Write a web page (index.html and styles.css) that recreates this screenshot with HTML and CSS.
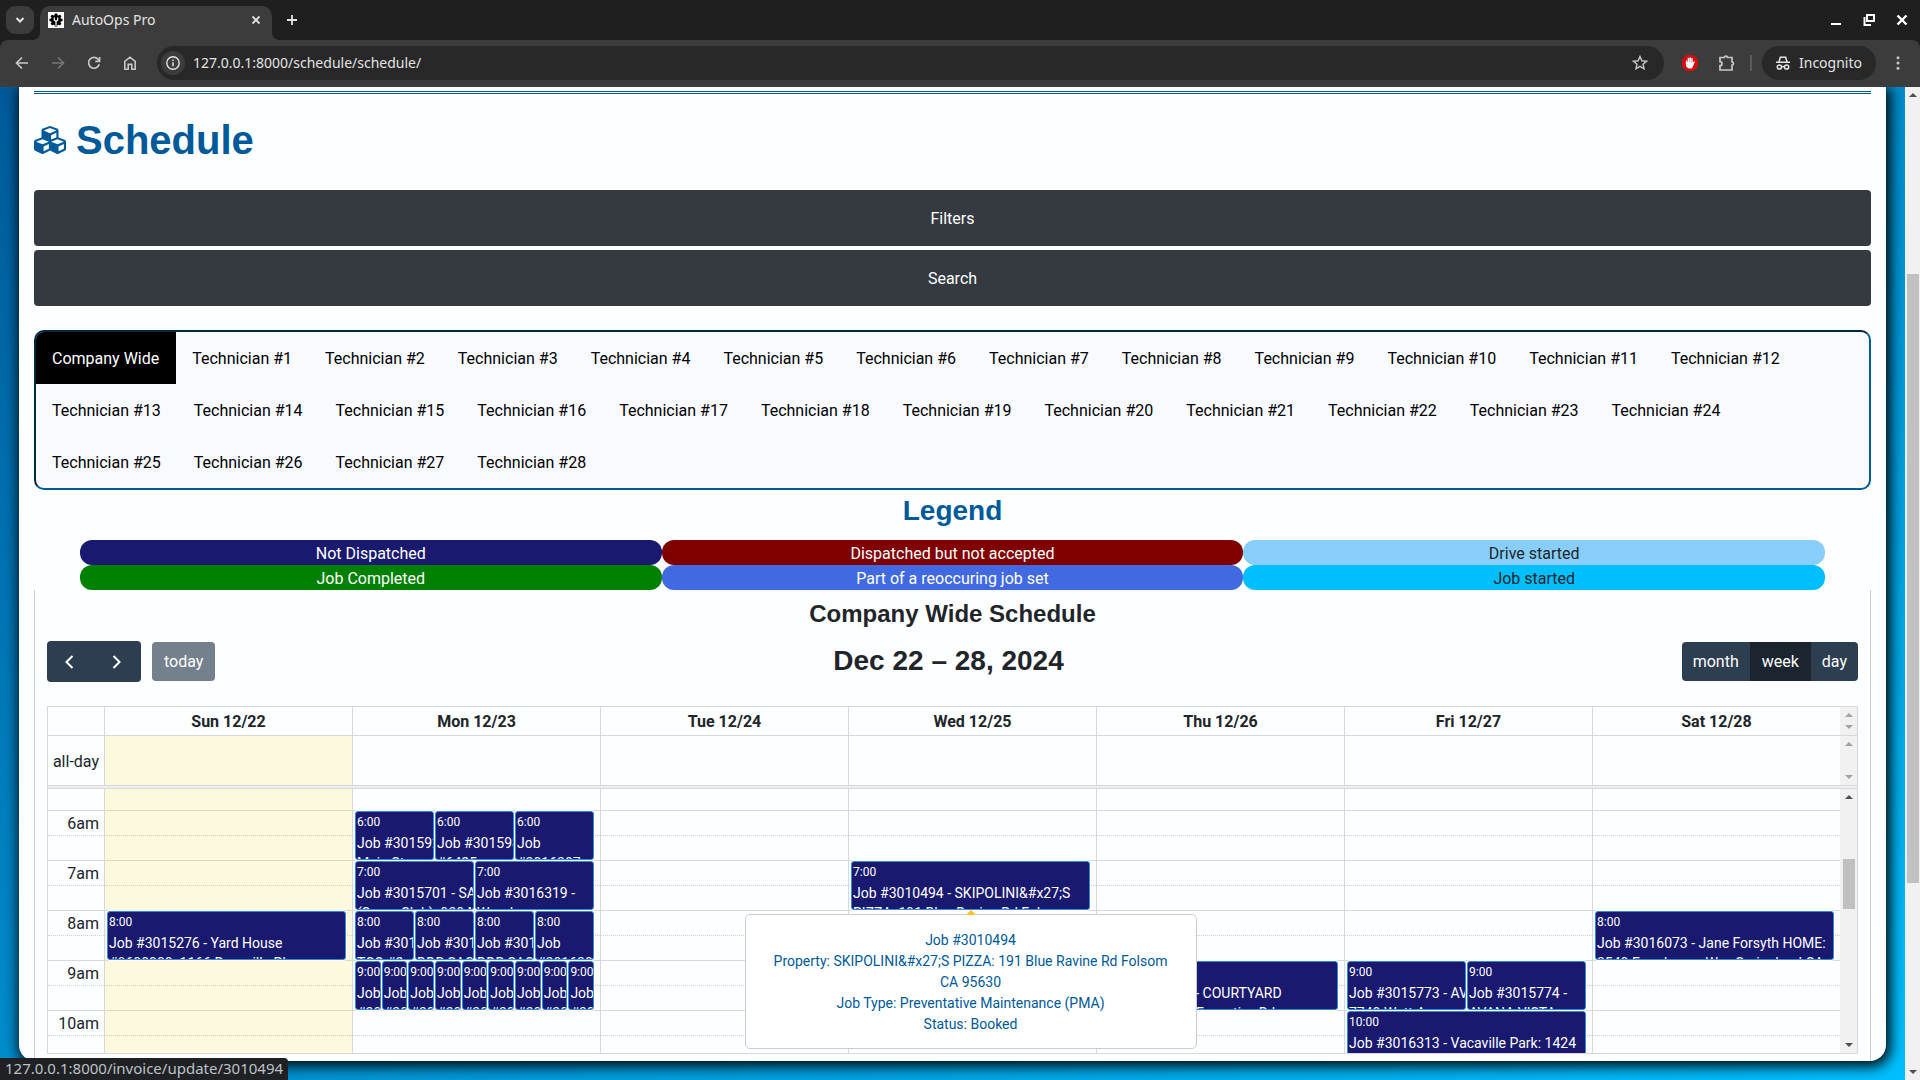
FILE: index.html
```html
<!DOCTYPE html>
<html lang="en">
<head>
    <meta charset="UTF-8">
    <meta name="viewport" content="width=device-width, initial-scale=1.0">
    <title>AutoOps Pro</title>
    <link rel="stylesheet" href="styles.css">
</head>
<body>
    <!-- Browser window -->
    <div class="tab-strip">
        <button class="tab-search" aria-label="Search tabs">
            <svg width="10" height="10" viewBox="0 0 10 10"><path d="M1.5 3L5 6.5 8.5 3" fill="none" stroke="#e3e3e3" stroke-width="2"/></svg>
        </button>
        <div class="browser-tab">
            <svg class="favicon" width="16" height="16" viewBox="0 0 16 16">
                <rect width="16" height="16" fill="#fff"/>
                <circle cx="8" cy="8" r="5.2" fill="#000"/>
                <path d="M8 1.5v13M1.5 8h13M3.4 3.4l9.200 9.200M12.600 3.400L3.400 12.600" stroke="#000" stroke-width="2.6"/>
                <path d="M6.3 5.6v2.4L8 9.4l1.7-1.4V5.6M8 9.4V14" fill="none" stroke="#fff" stroke-width="1.2"/>
            </svg>
            <span class="tab-title">AutoOps Pro</span>
            <button class="icon-btn" aria-label="Close tab">
                <svg width="10" height="10" viewBox="0 0 10 10"><path d="M1.5 1.5l7 7M8.5 1.5l-7 7" stroke="#e3e3e3" stroke-width="1.8"/></svg>
            </button>
        </div>
        <button class="icon-btn new-tab" aria-label="New tab">
            <svg width="12" height="12" viewBox="0 0 12 12"><path d="M6 1v10M1 6h10" stroke="#e3e3e3" stroke-width="1.8"/></svg>
        </button>
        <div class="window-controls">
            <button class="icon-btn" aria-label="Minimize">
                <svg width="12" height="12" viewBox="0 0 12 12"><path d="M1 10h10" stroke="#fff" stroke-width="2"/></svg>
            </button>
            <button class="icon-btn" aria-label="Restore">
                <svg width="12" height="12" viewBox="0 0 12 12"><path d="M4 1h7v6H4zM1.5 3v8H8" fill="none" stroke="#fff" stroke-width="2"/></svg>
            </button>
            <button class="icon-btn" aria-label="Close">
                <svg width="12" height="12" viewBox="0 0 12 12"><path d="M1.5 1.5l9 9M10.5 1.5l-9 9" stroke="#fff" stroke-width="2.4"/></svg>
            </button>
        </div>
    </div>

    <div class="toolbar">
        <button class="icon-btn" aria-label="Back">
            <svg width="16" height="16" viewBox="0 0 16 16"><path d="M14 8H3M8 2.5L2.5 8 8 13.5" fill="none" stroke="#c7c7c7" stroke-width="1.7"/></svg>
        </button>
        <button class="icon-btn" aria-label="Forward">
            <svg width="16" height="16" viewBox="0 0 16 16"><path d="M2 8h11M8 2.5L13.5 8 8 13.5" fill="none" stroke="#757575" stroke-width="1.7"/></svg>
        </button>
        <button class="icon-btn" aria-label="Reload">
            <svg width="16" height="16" viewBox="0 0 16 16"><path d="M13.2 9.2A5.4 5.4 0 1 1 12 4.2l1.2 1.3M13.6 2v4.3H9.3" fill="none" stroke="#c7c7c7" stroke-width="1.7"/></svg>
        </button>
        <button class="icon-btn" aria-label="Home">
            <svg width="16" height="16" viewBox="0 0 16 16"><path d="M2.8 6.3L8 2.2l5.2 4.1v7.9H9.8V9.4H6.2v4.8H2.8z" fill="none" stroke="#c7c7c7" stroke-width="1.6"/></svg>
        </button>
        <div class="omnibox">
            <span class="site-info">
                <svg width="16" height="16" viewBox="0 0 16 16"><circle cx="8" cy="8" r="6.2" fill="none" stroke="#e3e3e3" stroke-width="1.4"/><path d="M8 7.2v4M8 4.6v1.5" stroke="#e3e3e3" stroke-width="1.5"/></svg>
            </span>
            <input class="url" type="text" value="127.0.0.1:8000/schedule/schedule/" aria-label="Address">
            <svg width="18" height="18" viewBox="0 0 18 18"><path d="M9 2.5l1.9 4.3 4.7.4-3.6 3.1 1.1 4.6L9 12.4l-4.1 2.5L6 10.3 2.4 7.2l4.7-.4z" fill="none" stroke="#c7c7c7" stroke-width="1.4"/></svg>
        </div>
        <svg class="ext-blocker" width="18" height="18" viewBox="0 0 18 18">
            <path d="M5.4 1h7.2L17 5.4v7.2L12.6 17H5.4L1 12.6V5.4z" fill="#d40d12"/>
            <path d="M5.6 10V7.2M7.4 9V4.6M9.2 9V3.9M11 9V4.7" stroke="#fff" stroke-width="1.5" stroke-linecap="round"/>
            <path d="M4.9 8.4h6.9l1.2-1c.6-.3 1 .2.7.8l-2 4.8c-.5 1.2-1.3 1.5-2.6 1.5-2.7 0-4.2-1.6-4.2-4.2z" fill="#fff"/>
        </svg>
        <svg class="ext-puzzle" width="18" height="18" viewBox="0 0 18 18"><path d="M2 3.5h4.5a1.5 1.5 0 0 1 3 0H14V8a1.5 1.5 0 0 1 0 3v5H2v-4.3a2 2 0 0 0 0-4z" fill="none" stroke="#c7c7c7" stroke-width="1.7"/></svg>
        <span class="toolbar-divider"></span>
        <button class="incognito">
            <svg width="16" height="16" viewBox="0 0 16 16" fill="none" stroke="#e3e3e3" stroke-width="1.5"><path d="M1 7.3h14M4 7l1.3-4.7h5.4L12 7M6.5 12q1.5-1 3 0"/><circle cx="4.4" cy="12" r="2.1"/><circle cx="11.6" cy="12" r="2.1"/></svg>
            Incognito
        </button>
        <button class="icon-btn" aria-label="Menu">
            <svg width="16" height="16" viewBox="0 0 16 16" fill="#c7c7c7"><circle cx="8" cy="2.8" r="1.5"/><circle cx="8" cy="8" r="1.5"/><circle cx="8" cy="13.2" r="1.5"/></svg>
        </button>
    </div>

    <!-- Page -->
    <div class="viewport">
        <main class="page">
            <div class="container">
                <hr class="rule">
                <h1>
                    <svg width="32" height="32" viewBox="0 0 512 512" fill="currentColor"><path d="M488.6 250.2L392 214V105.5c0-15-9.3-28.4-23.4-33.7l-100-37.5c-8.1-3.1-17.1-3.1-25.3 0l-100 37.5c-14.1 5.3-23.4 18.7-23.4 33.7V214l-96.6 36.2C9.3 255.5 0 268.9 0 283.9V394c0 13.6 7.7 26.1 19.9 32.2l100 50c10.1 5.1 22.1 5.1 32.2 0l103.9-52 103.9 52c10.1 5.1 22.1 5.1 32.2 0l100-50c12.2-6.1 19.9-18.6 19.9-32.2V283.9c0-15-9.3-28.4-23.4-33.7zM358 214.8l-85 31.9v-68.2l85-37v73.3zM154 104.1l102-38.2 102 38.2v.6l-102 41.4-102-41.4v-.6zm84 291.1l-85 42.5v-79.1l85-38.8v75.4zm0-112l-102 41.4-102-41.4v-.6l102-38.2 102 38.2v.6zm240 112l-85 42.5v-79.1l85-38.8v75.4zm0-112l-102 41.4-102-41.4v-.6l102-38.2 102 38.2v.6z"/></svg>
                    Schedule
                </h1>

                <div class="accordion">
                    <button class="accordion-btn">Filters</button>
                    <button class="accordion-btn">Search</button>
                </div>

                <div class="tabs">
                    <button class="tab active">Company Wide</button>
                    <button class="tab">Technician #1</button>
                    <button class="tab">Technician #2</button>
                    <button class="tab">Technician #3</button>
                    <button class="tab">Technician #4</button>
                    <button class="tab">Technician #5</button>
                    <button class="tab">Technician #6</button>
                    <button class="tab">Technician #7</button>
                    <button class="tab">Technician #8</button>
                    <button class="tab">Technician #9</button>
                    <button class="tab">Technician #10</button>
                    <button class="tab">Technician #11</button>
                    <button class="tab">Technician #12</button>
                    <button class="tab">Technician #13</button>
                    <button class="tab">Technician #14</button>
                    <button class="tab">Technician #15</button>
                    <button class="tab">Technician #16</button>
                    <button class="tab">Technician #17</button>
                    <button class="tab">Technician #18</button>
                    <button class="tab">Technician #19</button>
                    <button class="tab">Technician #20</button>
                    <button class="tab">Technician #21</button>
                    <button class="tab">Technician #22</button>
                    <button class="tab">Technician #23</button>
                    <button class="tab">Technician #24</button>
                    <button class="tab">Technician #25</button>
                    <button class="tab">Technician #26</button>
                    <button class="tab">Technician #27</button>
                    <button class="tab">Technician #28</button>
                </div>

                <h2 class="legend-title">Legend</h2>
                <div class="legend">
                    <div class="legend-item not-dispatched">Not Dispatched</div>
                    <div class="legend-item dispatched">Dispatched but not accepted</div>
                    <div class="legend-item drive-started">Drive started</div>
                    <div class="legend-item completed">Job Completed</div>
                    <div class="legend-item recurring">Part of a reoccuring job set</div>
                    <div class="legend-item job-started">Job started</div>
                </div>

                <section class="tab-content">
                    <h3>Company Wide Schedule</h3>

                    <div class="cal-toolbar">
                        <div class="cal-nav">
                            <div class="btn-group">
                                <button class="cal-btn arrow" aria-label="Previous week">
                                    <svg width="24" height="24" viewBox="0 0 24 24"><path d="M14.5 6l-6 6 6 6" fill="none" stroke="#fff" stroke-width="2"/></svg>
                                </button>
                                <button class="cal-btn arrow" aria-label="Next week">
                                    <svg width="24" height="24" viewBox="0 0 24 24"><path d="M8.5 6l6 6-6 6" fill="none" stroke="#fff" stroke-width="2"/></svg>
                                </button>
                            </div>
                            <button class="cal-btn" disabled>today</button>
                        </div>
                        <h2 class="cal-title">Dec 22 – 28, 2024</h2>
                        <div class="btn-group">
                            <button class="cal-btn">month</button>
                            <button class="cal-btn active">week</button>
                            <button class="cal-btn">day</button>
                        </div>
                    </div>

                    <div class="calendar">
                        <div class="cal-row cal-head">
                            <div></div>
                            <div class="cell">Sun 12/22</div>
                            <div class="cell">Mon 12/23</div>
                            <div class="cell">Tue 12/24</div>
                            <div class="cell">Wed 12/25</div>
                            <div class="cell">Thu 12/26</div>
                            <div class="cell">Fri 12/27</div>
                            <div class="cell">Sat 12/28</div>
                            <div class="scrollbar idle"><i class="up"></i><i class="down"></i></div>
                        </div>
                        <div class="cal-row all-day">
                            <div class="axis">all-day</div>
                            <div class="cell today"></div>
                            <div class="cell"></div>
                            <div class="cell"></div>
                            <div class="cell"></div>
                            <div class="cell"></div>
                            <div class="cell"></div>
                            <div class="cell"></div>
                            <div class="scrollbar idle"><i class="up"></i><i class="down"></i></div>
                        </div>
                        <div class="cal-divider"></div>

                        <div class="time-grid">
                            <div class="slots">
                                <div class="slot partial"></div>
                                <div class="slot"><span class="slot-label">6am</span></div>
                                <div class="slot"><span class="slot-label">7am</span></div>
                                <div class="slot"><span class="slot-label">8am</span></div>
                                <div class="slot"><span class="slot-label">9am</span></div>
                                <div class="slot"><span class="slot-label">10am</span></div>
                            </div>

                            <div class="cal-row columns">
                                <div></div>
                                <div class="day today">
                                    <div class="hour at-8">
                                        <a class="event" href="#"><span class="event-time">8:00</span><span class="event-title">Job #3015276 - Yard House #8600000: 1166 Roseville Pkwy</span></a>
                                    </div>
                                </div>
                                <div class="day">
                                    <div class="hour at-6">
                                        <a class="event" href="#"><span class="event-time">6:00</span><span class="event-title">Job #3015921 - 2253 Main St</span></a>
                                        <a class="event" href="#"><span class="event-time">6:00</span><span class="event-title">Job #3015980 - CLUB #6425</span></a>
                                        <a class="event" href="#"><span class="event-time">6:00</span><span class="event-title">Job #3016307</span></a>
                                    </div>
                                    <div class="hour at-7">
                                        <a class="event" href="#"><span class="event-time">7:00</span><span class="event-title">Job #3015701 - SAMS CLUB (Sams Club): 930 Main St</span></a>
                                        <a class="event" href="#"><span class="event-time">7:00</span><span class="event-title">Job #3016319 - Woodmore</span></a>
                                    </div>
                                    <div class="hour at-8">
                                        <a class="event" href="#"><span class="event-time">8:00</span><span class="event-title">Job #3015802 TCC #2</span></a>
                                        <a class="event" href="#"><span class="event-time">8:00</span><span class="event-title">Job #3015803 DDR SAC</span></a>
                                        <a class="event" href="#"><span class="event-time">8:00</span><span class="event-title">Job #3015804 DDR SAC</span></a>
                                        <a class="event" href="#"><span class="event-time">8:00</span><span class="event-title">Job #3016300</span></a>
                                    </div>
                                    <div class="hour at-9">
                                        <a class="event" href="#"><span class="event-time">9:00</span><span class="event-title">Job #3015810</span></a>
                                        <a class="event" href="#"><span class="event-time">9:00</span><span class="event-title">Job #3015811</span></a>
                                        <a class="event" href="#"><span class="event-time">9:00</span><span class="event-title">Job #3015812</span></a>
                                        <a class="event" href="#"><span class="event-time">9:00</span><span class="event-title">Job #3015813</span></a>
                                        <a class="event" href="#"><span class="event-time">9:00</span><span class="event-title">Job #3015814</span></a>
                                        <a class="event" href="#"><span class="event-time">9:00</span><span class="event-title">Job #3015815</span></a>
                                        <a class="event" href="#"><span class="event-time">9:00</span><span class="event-title">Job #3015816</span></a>
                                        <a class="event" href="#"><span class="event-time">9:00</span><span class="event-title">Job #3015817</span></a>
                                        <a class="event" href="#"><span class="event-time">9:00</span><span class="event-title">Job #3015818</span></a>
                                    </div>
                                </div>
                                <div class="day"></div>
                                <div class="day">
                                    <div class="hour at-7 hovered">
                                        <a class="event" href="#"><span class="event-time">7:00</span><span class="event-title">Job #3010494 - SKIPOLINI&amp;#x27;S PIZZA: 191 Blue Ravine Rd Folsom CA 95630</span></a>
                                        <div class="popover" role="tooltip">
                                            <p>Job #3010494</p>
                                            <p>Property: SKIPOLINI&amp;#x27;S PIZZA: 191 Blue Ravine Rd Folsom CA 95630</p>
                                            <p>Job Type: Preventative Maintenance (PMA)</p>
                                            <p>Status: Booked</p>
                                        </div>
                                    </div>
                                </div>
                                <div class="day">
                                    <div class="hour at-9">
                                        <a class="event" href="#"><span class="event-time">9:00</span><span class="event-title">Job #3016124 - COURTYARD MARRIOTT: 17 Executive Rd</span></a>
                                    </div>
                                </div>
                                <div class="day">
                                    <div class="hour at-9">
                                        <a class="event" href="#"><span class="event-time">9:00</span><span class="event-title">Job #3015773 - AVANA VISTA: 7740 Watt Ave</span></a>
                                        <a class="event" href="#"><span class="event-time">9:00</span><span class="event-title">Job #3015774 - AVANA VISTA</span></a>
                                    </div>
                                    <div class="hour at-10">
                                        <a class="event" href="#"><span class="event-time">10:00</span><span class="event-title">Job #3016313 - Vacaville Park: 1424</span></a>
                                    </div>
                                </div>
                                <div class="day">
                                    <div class="hour at-8">
                                        <a class="event" href="#"><span class="event-time">8:00</span><span class="event-title">Job #3016073 - Jane Forsyth HOME: 3540 Farmhouse Way Springland CA</span></a>
                                    </div>
                                </div>
                                <div class="scrollbar"><i class="up"></i><b class="thumb"></b><i class="down"></i></div>
                            </div>
                        </div>
                    </div>
                </section>
            </div>
        </main>
        <div class="scrollbar page-scrollbar"><i class="up"></i><b class="thumb"></b><i class="down"></i></div>
        <div class="status-bar">127.0.0.1:8000/invoice/update/3010494</div>
    </div>
</body>
</html>
```

FILE: styles.css
```css
* {
    margin: 0;
    padding: 0;
    box-sizing: border-box;
}

body {
    height: 100vh;
    display: flex;
    flex-direction: column;
    overflow: hidden;
    background: #1f1f1f;
    font-family: Roboto, sans-serif;
    font-size: 16px;
    line-height: 24px;
    color: #212529;
}

button {
    border: none;
    background: none;
    font: inherit;
    color: inherit;
    cursor: pointer;
}

svg {
    display: block;
    flex: none;
}

h1, h2, h3 {
    font-family: "Liberation Sans", Arial, sans-serif;
    font-weight: bold;
}

/* Browser window */
.tab-strip,
.toolbar,
.status-bar {
    font-family: "Noto Sans", sans-serif;
    font-size: 14px;
    line-height: 20px;
    color: #e3e3e3;
}

.tab-strip {
    display: flex;
    align-items: center;
    height: 40px;
    flex: none;
    padding: 0 12px 0 6px;
}

.tab-search {
    display: flex;
    align-items: center;
    justify-content: center;
    width: 28px;
    height: 28px;
    border-radius: 9px;
    background: #3c3c3c;
}

.browser-tab {
    position: relative;
    display: flex;
    align-items: center;
    align-self: flex-end;
    gap: 8px;
    width: 232px;
    height: 34px;
    margin-left: 6px;
    padding: 0 5px 6px 8px;
    border-radius: 10px 10px 0 0;
    background: #3c3c3c;
}

/* Flared feet of the tab */
.browser-tab::before,
.browser-tab::after {
    content: "";
    position: absolute;
    bottom: 0;
    width: 8px;
    height: 8px;
}

.browser-tab::before {
    right: 100%;
    background: radial-gradient(circle at 0 0, transparent 8px, #3c3c3c 8px);
}

.browser-tab::after {
    left: 100%;
    background: radial-gradient(circle at 100% 0, transparent 8px, #3c3c3c 8px);
}

.tab-title {
    flex: 1;
}

.icon-btn {
    display: flex;
    align-items: center;
    justify-content: center;
    width: 22px;
    height: 22px;
}

.new-tab {
    margin-left: 9px;
}

.window-controls {
    display: flex;
    gap: 11px;
    margin-left: auto;
    margin-right: -5px;
}

.toolbar {
    display: flex;
    align-items: center;
    gap: 14px;
    height: 47px;
    flex: none;
    padding: 0 11px 1px;
    border-radius: 8px 8px 0 0;
    background: #3c3c3c;
}

.omnibox {
    display: flex;
    align-items: center;
    flex: 1;
    height: 34px;
    margin-left: 2px;
    padding: 0 15px 0 4px;
    border-radius: 17px;
    background: #282828;
}

.site-info {
    display: flex;
    align-items: center;
    justify-content: center;
    width: 24px;
    height: 24px;
    margin-right: 8px;
    border-radius: 12px;
    background: #3c3c3c;
}

.url {
    flex: 1;
    border: none;
    outline: none;
    background: none;
    font: inherit;
    color: #e3e3e3;
}

.ext-blocker {
    margin-left: 3px;
}

.ext-puzzle {
    margin-left: 5px;
}

.toolbar-divider {
    width: 2px;
    height: 16px;
    background: #5a5a5a;
}

.incognito {
    display: flex;
    align-items: center;
    gap: 8px;
    height: 34px;
    margin-left: -4px;
    margin-right: -3px;
    padding: 0 14px 0 13px;
    border-radius: 17px;
    background: #282828;
}

.status-bar {
    position: absolute;
    left: 0;
    bottom: 0;
    height: 22px;
    padding: 0 5px;
    border-radius: 0 4px 0 0;
    background: #202124;
    color: #bdc1c6;
    font-size: 15px;
}

/* Page */
.viewport {
    position: relative;
    display: flex;
    flex: 1;
    min-height: 0;
}

.page {
    display: flex;
    flex: 1;
    min-width: 0;
    padding: 0 19px 19px;
    overflow: hidden;
    background: linear-gradient(to bottom right, #005a99, #00bfff);
}

.container {
    display: flex;
    flex-direction: column;
    flex: 1;
    min-width: 0;
    padding: 4px 15px 0;
    border-radius: 0 0 16px 16px;
    background: #fdfeff;
    box-shadow: 2px 3px 14px 2px #000;
}

.rule {
    height: 3px;
    border: solid #005a8c;
    border-width: 1px 0;
}

h1 {
    display: flex;
    align-items: center;
    gap: 10px;
    padding: 22px 0 26px;
    font-size: 40px;
    line-height: 48px;
    color: #005a99;
}

.accordion {
    display: flex;
    flex-direction: column;
    gap: 4px;
}

.accordion-btn {
    padding: 17px 16px 15px;
    border-radius: 4px;
    background: #343a40;
    color: #fff;
}

.tabs {
    display: flex;
    flex-wrap: wrap;
    margin-top: 24px;
    border: 2px inset #005a99;
    border-radius: 10px;
    background: #f8faff;
    overflow: hidden;
}

.tab {
    padding: 15px 17px 13px 16px;
    color: #000;
}

.tab.active {
    background: #000;
    color: #fff;
}

.legend-title {
    margin-bottom: 8px;
    font-size: 28px;
    line-height: 42px;
    text-align: center;
    color: #005a99;
}

.legend {
    display: grid;
    grid-template-columns: repeat(3, 1fr);
    width: 95%;
    margin: 0 auto;
}

.legend-item {
    height: 25px;
    border-radius: 12px;
    line-height: 27px;
    text-align: center;
    color: #fff;
}

.not-dispatched { background: midnightblue; }
.dispatched { background: maroon; }
.drive-started { background: lightskyblue; color: #212529; }
.completed { background: green; }
.recurring { background: royalblue; }
.job-started { background: deepskyblue; color: #212529; }

.tab-content {
    display: flex;
    flex-direction: column;
    flex: 1;
    min-height: 0;
    padding: 9px 12px 7px;
    border: 1px solid #ccc;
    border-width: 0 1px;
}

h3 {
    margin-bottom: 12px;
    font-size: 24px;
    line-height: 30px;
    text-align: center;
}

/* Calendar */
.cal-toolbar {
    display: flex;
    align-items: center;
    justify-content: space-between;
    margin-bottom: 24px;
}

.cal-nav {
    display: flex;
    align-items: center;
    gap: 11px;
}

.cal-title {
    padding-bottom: 2px;
    font-size: 28px;
    line-height: 34px;
}

.btn-group {
    display: flex;
    border-radius: 4px;
    overflow: hidden;
}

.cal-btn {
    height: 39px;
    padding: 0 11px;
    border-radius: 4px;
    background: #2c3e50;
    color: #fff;
}

.cal-btn:disabled {
    padding: 0 12px;
    opacity: 0.65;
}

.cal-btn.active {
    padding: 0 12px;
    background: #1a252f;
}

.cal-btn.arrow {
    width: 47px;
    height: 41px;
}

.btn-group .cal-btn {
    border-radius: 0;
}

.calendar {
    display: flex;
    flex-direction: column;
    flex: 1;
    min-height: 0;
    border: 1px solid #d8d8dc;
}

.cal-row {
    display: grid;
    grid-template-columns: 56px repeat(7, 1fr) 17px;
}

.cal-head {
    height: 29px;
    border-bottom: 1px solid #d8d8dc;
    line-height: 30px;
    font-weight: bold;
    text-align: center;
}

.cell,
.day {
    min-width: 0;
    border-left: 1px solid #d8d8dc;
}

.cal-head > * {
    height: 28px;
}

.today {
    background: rgba(255, 220, 40, 0.15);
}

.all-day {
    height: 49px;
}

.axis {
    align-self: center;
    padding: 2px 5px 0 0;
    text-align: right;
}

.cal-divider {
    height: 4px;
    flex: none;
    border: 1px solid #d8d8dc;
    border-width: 1px 0;
    background: #eeeef0;
}

.time-grid {
    display: grid;
    flex: 1;
    min-height: 0;
    overflow: hidden;
    grid-template-rows: 100%;
}

.slots,
.columns {
    grid-area: 1 / 1;
    min-height: 0;
}

.slots {
    margin-right: 17px;
}

.columns {
    grid-template-rows: 100%;
}

.slot {
    height: 50px;
    border-top: 1px solid #d8d8dc;
}

.slot.partial {
    height: 21px;
    border-top: none;
}

.slot-label {
    display: block;
    height: 25px;
    padding-right: calc(100% - 51px);
    border-bottom: 1px dotted #d0d0d4;
    line-height: 26px;
    text-align: right;
    white-space: nowrap;
}

.day {
    display: grid;
    grid-template-columns: 100%;
    grid-template-rows: 21px repeat(5, 50px);
}

.at-6 { grid-row: 2; }
.at-7 { grid-row: 3; }
.at-8 { grid-row: 4; }
.at-9 { grid-row: 5; }
.at-10 { grid-row: 6; }

.hour {
    display: flex;
    gap: 1px;
    min-width: 0;
    margin: 1px 6px 0 2px;
}

.event {
    flex: 1 1 0;
    min-width: 0;
    padding: 1px 0 0 1px;
    border: 1px solid #3788d8;
    border-radius: 3px;
    background: midnightblue;
    box-shadow: 0 0 0 1px #fff;
    color: #fff;
    text-decoration: none;
    overflow: hidden;
}

.event-time,
.event-title {
    display: block;
}

.event-time {
    font-size: 12px;
    line-height: 18px;
}

.event-title {
    margin-top: 2px;
    font-size: 14px;
    line-height: 20px;
}

/* Titles run on under the next event of the same hour */
.event:not(:last-child) .event-title {
    width: 180%;
}

.hovered {
    position: relative;
    z-index: 1;
}

.hovered .event .event-title {
    width: auto;
}

.popover {
    position: absolute;
    top: calc(100% + 4px);
    left: 50%;
    width: 452px;
    padding: 15px 24px 13px;
    transform: translateX(-50%);
    border: 1px solid #ccc;
    border-radius: 5px;
    background: #fff;
    font-size: 14px;
    line-height: 21px;
    text-align: center;
    color: #005a99;
}

.popover::before {
    content: "";
    position: absolute;
    bottom: 100%;
    left: 50%;
    transform: translateX(-50%);
    border: 5px solid transparent;
    border-top-width: 0;
    border-bottom-color: #ffc021;
}

/* Scrollbars */
.scrollbar {
    display: flex;
    flex-direction: column;
    align-items: center;
    justify-content: space-between;
    padding: 6px 0;
    background: #f1f1f1;
}

.scrollbar .up,
.scrollbar .down {
    border: 4px solid transparent;
}

.scrollbar .up {
    border-top-width: 0;
    border-bottom-color: #505050;
}

.scrollbar .down {
    border-bottom-width: 0;
    border-top-color: #505050;
}

.scrollbar.idle .up {
    border-bottom-color: #a3a3a3;
}

.scrollbar.idle .down {
    border-top-color: #a3a3a3;
}

.thumb {
    width: 12px;
    height: 20%;
    margin-bottom: 74px;
    background: #c1c1c1;
}

.page-scrollbar {
    width: 15px;
}

.page-scrollbar .thumb {
    height: 62%;
    margin-bottom: 10px;
}
```
